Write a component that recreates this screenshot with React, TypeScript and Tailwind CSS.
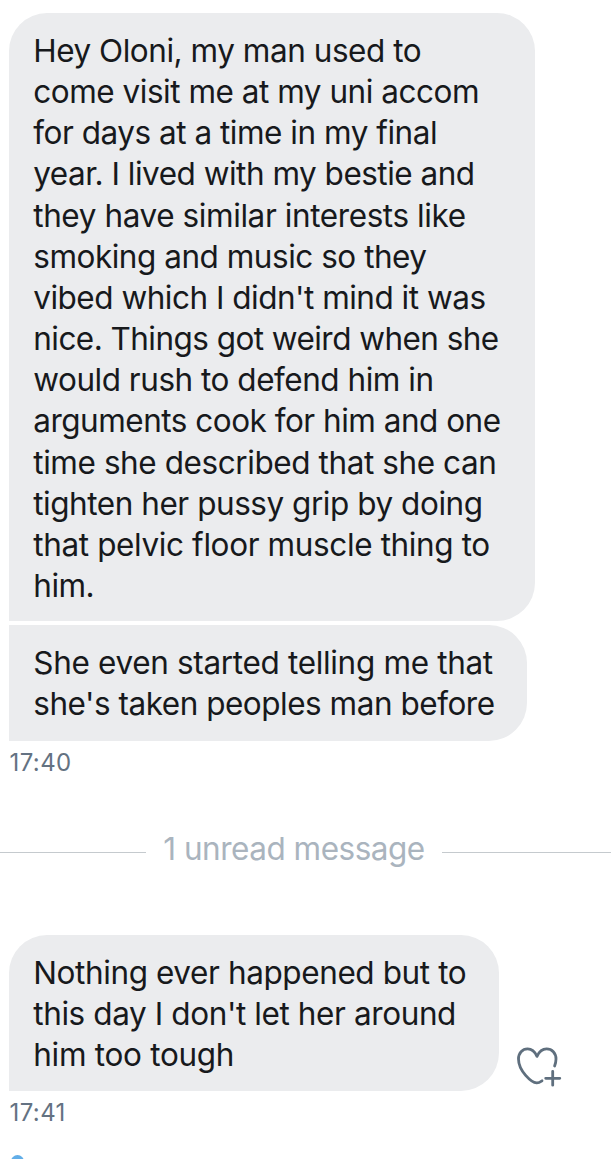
interface Line {
  text: string;
  tracking: string;
}

interface BubbleProps {
  lines: Line[];
  className: string;
}

const FIRST: Line[] = [
  { text: "Hey Oloni, my man used to", tracking: "tracking-[-0.47px]" },
  { text: "come visit me at my uni accom", tracking: "tracking-[-0.48px]" },
  { text: "for days at a time in my final", tracking: "tracking-[-0.48px]" },
  { text: "year. I lived with my bestie and", tracking: "tracking-[-0.5px]" },
  { text: "they have similar interests like", tracking: "tracking-[-0.41px]" },
  { text: "smoking and music so they", tracking: "tracking-[-0.48px]" },
  { text: "vibed which I didn't mind it was", tracking: "tracking-[-0.5px]" },
  { text: "nice. Things got weird when she", tracking: "tracking-[-0.55px]" },
  { text: "would rush to defend him in", tracking: "tracking-[-0.48px]" },
  { text: "arguments cook for him and one", tracking: "tracking-[-0.5px]" },
  { text: "time she described that she can", tracking: "tracking-[-0.42px]" },
  { text: "tighten her pussy grip by doing", tracking: "tracking-[-0.46px]" },
  { text: "that pelvic floor muscle thing to", tracking: "tracking-[-0.38px]" },
  { text: "him.", tracking: "tracking-[-0.5px]" },
];

const SECOND: Line[] = [
  { text: "She even started telling me that", tracking: "tracking-[-0.33px]" },
  { text: "she's taken peoples man before", tracking: "tracking-[-0.48px]" },
];

const THIRD: Line[] = [
  { text: "Nothing ever happened but to", tracking: "tracking-[-0.4px]" },
  { text: "this day I don't let her around", tracking: "tracking-[-0.4px]" },
  { text: "him too tough", tracking: "tracking-[-0.3px]" },
];

function Bubble({ lines, className }: BubbleProps) {
  return (
    <div
      className={`ml-[9px] bg-[#ebecee] pt-[17px] pl-[24.25px] text-[31.5px] leading-[41.15px] whitespace-nowrap text-[#17191c] ${className}`}
    >
      {lines.map((line) => (
        <p key={line.text} className={line.tracking}>
          {line.text}
        </p>
      ))}
    </div>
  );
}

function Timestamp({ time }: { time: string }) {
  return (
    <div className="mt-[7px] h-[30px] pl-[9.5px] text-[24px] leading-[30px] tracking-[0.4px] text-[#647282]">
      {time}
    </div>
  );
}

function HeartPlus() {
  return (
    <svg
      className="mb-1 ml-[17px] h-[42px] w-12"
      viewBox="0 0 48 42"
      fill="none"
      stroke="#5f6f7e"
      strokeWidth="2.8"
      strokeLinecap="round"
      strokeLinejoin="round"
    >
      <path d="M38.6 21C39.5 18.6 40 16.4 40 14C40 8.2 36 3.9 30.6 3.9C26.5 3.9 23.2 6.5 21 11.3C18.8 6.5 15.7 3.9 11.6 3.9C6.3 3.9 2.5 8.2 2.5 14C2.5 26 15.5 37.6 20.7 37.9C22.5 38 24.2 37 26 35.8" />
      <path d="M36.7 26.3V40.2M29.7 33.3H43.8" />
    </svg>
  );
}

export default function App() {
  return (
    <main className="h-[1159px] w-[611px] overflow-hidden bg-white pt-[13px] font-['Inter',sans-serif]">
      <Bubble lines={FIRST} className="h-[608px] w-[526px] rounded-[38px] rounded-bl-none" />
      <Bubble lines={SECOND} className="mt-1 h-[116px] w-[518px] rounded-r-[38px]" />
      <Timestamp time="17:40" />

      {/* Unread divider */}
      <div className="mt-[51px] flex h-10 items-center">
        <div className="mt-[7px] h-px w-[146px] bg-[#c5cace]" />
        <div className="w-[296px] text-center text-[31.5px] leading-10 tracking-[-0.49px] whitespace-nowrap text-[#aab4be]">
          1 unread message
        </div>
        <div className="mt-[7px] h-px flex-1 bg-[#c5cace]" />
      </div>

      <div className="mt-[66px] flex items-end">
        <Bubble lines={THIRD} className="h-[156px] w-[490px] rounded-[38px] rounded-bl-none" />
        <HeartPlus />
      </div>
      <Timestamp time="17:41" />

      <div className="mt-[27px] ml-[11px] size-[13px] rounded-full bg-[#62aee8]" />
    </main>
  );
}
